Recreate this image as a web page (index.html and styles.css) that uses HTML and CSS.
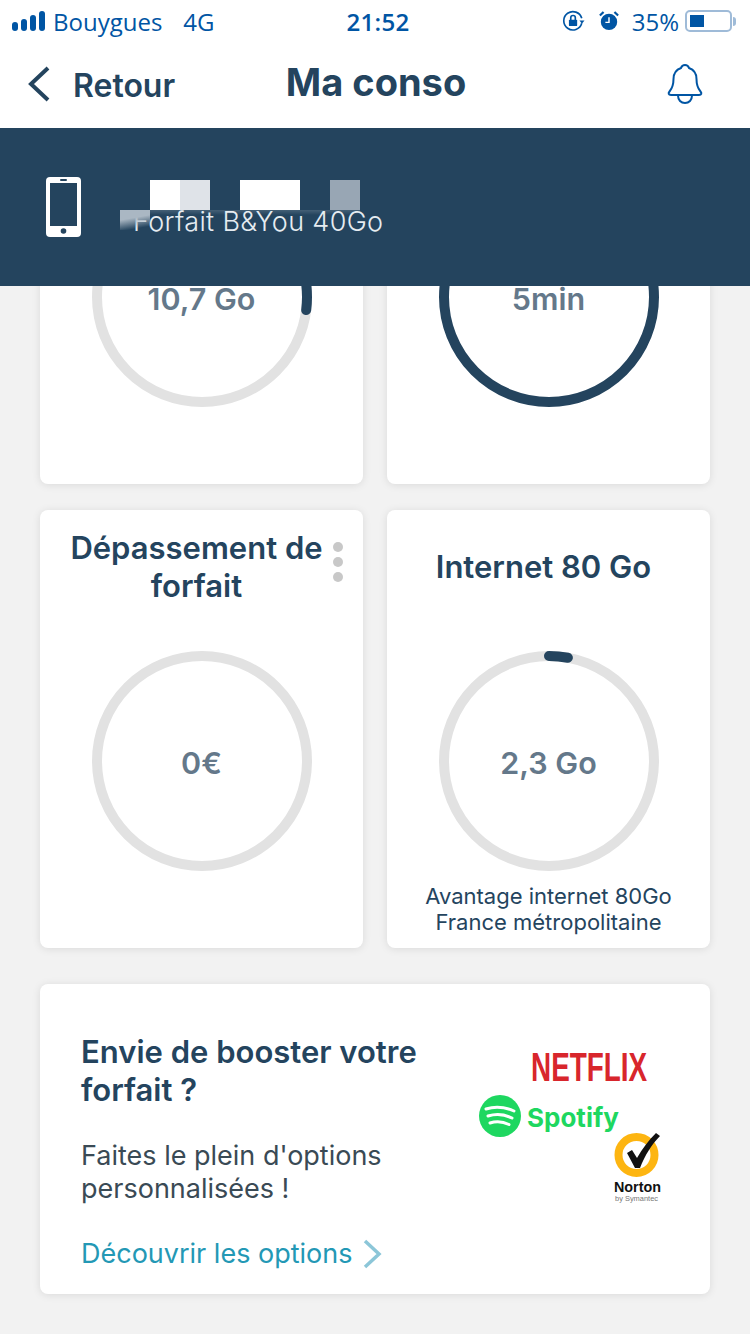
FILE: index.html
```html
<!DOCTYPE HTML>
<html lang="fr">

<head>
    <meta charset="utf-8">
    <meta name="viewport" content="width=device-width, initial-scale=1">
    <title>Ma conso</title>
    <link rel="stylesheet" href="styles.css">
</head>

<body>
    <div class="status-bar">
        <div class="status-left">
            <svg class="signal" width="34" height="20" viewBox="0 0 34 20">
                <rect x="0" y="11" width="6" height="9" rx="3" fill="#0055a4"/>
                <rect x="9" y="8" width="6" height="12" rx="3" fill="#0055a4"/>
                <rect x="18" y="4" width="6" height="16" rx="3" fill="#0055a4"/>
                <rect x="27" y="0" width="6" height="20" rx="3" fill="#0055a4"/>
            </svg>
            <span>Bouygues</span>
            <span class="network">4G</span>
        </div>
        <div class="status-time">21:52</div>
        <div class="status-right">
            <svg width="23" height="22" viewBox="0 0 24 24" fill="none" stroke="#0055a4" stroke-width="1.800">
                <path d="M21 14.500A10 10 0 1 1 21 9"/>
                <path d="M18.500 11.500h5.500l-2.800 3.500z" fill="#0055a4" stroke="none"/>
                <rect x="7" y="10.500" width="9" height="7" rx="1" fill="#0055a4" stroke="none"/>
                <path d="M9 11V8.500a2.500 2.500 0 0 1 5 0V11"/>
            </svg>
            <svg class="alarm" width="20" height="20" viewBox="0 0 22 22">
                <circle cx="11" cy="12" r="9" fill="#0055a4"/>
                <path d="M11 7v5.500H7" fill="none" stroke="#fff" stroke-width="1.600"/>
                <path d="M1 5l4-4M21 5l-4-4" stroke="#0055a4" stroke-width="2.400"/>
            </svg>
            <span class="percent">35%</span>
            <div class="battery"><div class="battery-level"></div></div>
            <div class="battery-nub"></div>
        </div>
    </div>

    <div class="nav">
        <div class="nav-back">
            <svg width="24" height="36" viewBox="0 0 24 36" fill="none" stroke="#24445e" stroke-width="4">
                <path d="M21 2L4 18l17 16"/>
            </svg>
            <span>Retour</span>
        </div>
        <div class="nav-title">Ma conso</div>
        <div class="nav-bell">
            <svg width="38" height="42" viewBox="0 0 38 42" fill="none" stroke="#0055a4" stroke-width="2">
                <path d="M19 2c2.500 0 3.500 1.500 4 3 5 1.800 7.500 6 7.500 11 0 6 1 9 4 12.500 1.500 1.800 1 3.500-1.500 3.500H5c-2.500 0-3-1.700-1.500-3.500 3-3.500 4-6.500 4-12.500 0-5 2.500-9.200 7.500-11 .5-1.500 1.500-3 4-3z"/>
                <path d="M12 32.500c0 4.500 3 7.500 7 7.500s7-3 7-7.500"/>
            </svg>
        </div>
    </div>

    <div class="line-header">
        <svg width="36" height="60" viewBox="0 0 36 60">
            <rect x="0" y="0" width="35" height="60" rx="4" fill="#fff"/>
            <rect x="4" y="6" width="27" height="43" fill="#24445e"/>
            <rect x="14" y="2" width="7" height="2" rx="1" fill="#24445e"/>
            <circle cx="17.500" cy="54" r="2.800" fill="#24445e"/>
        </svg>
        <div class="line-plan">Forfait B&amp;You 40Go</div>
        <div class="mask mask-a"></div>
        <div class="mask mask-b"></div>
        <div class="mask mask-c"></div>
        <div class="mask mask-d"></div>
        <div class="mask mask-e"></div>
        <div class="mask mask-f"></div>
    </div>

    <div class="scroll">
        <div class="cards">
            <div class="card">
                <div class="card-title"></div>
                <div class="ring">
                    <svg width="220" height="220" viewBox="0 0 220 220">
                        <circle class="ring-track" cx="110" cy="110" r="105"/>
                        <circle class="ring-value" cx="110" cy="110" r="105" stroke-dasharray="178 660"/>
                    </svg>
                    <div class="ring-label">10,7 Go</div>
                </div>
            </div>
            <div class="card">
                <div class="card-title"></div>
                <div class="ring">
                    <svg width="220" height="220" viewBox="0 0 220 220">
                        <circle class="ring-value" cx="110" cy="110" r="105"/>
                    </svg>
                    <div class="ring-label">5min</div>
                </div>
            </div>
            <div class="card">
                <div class="card-title">Dépassement de<br>forfait</div>
                <div class="dots"><span></span><span></span><span></span></div>
                <div class="ring">
                    <svg width="220" height="220" viewBox="0 0 220 220">
                        <circle class="ring-track" cx="110" cy="110" r="105"/>
                    </svg>
                    <div class="ring-label">0€</div>
                </div>
            </div>
            <div class="card">
                <div class="card-title">Internet 80 Go</div>
                <div class="ring">
                    <svg width="220" height="220" viewBox="0 0 220 220">
                        <circle class="ring-track" cx="110" cy="110" r="105"/>
                        <circle class="ring-value" cx="110" cy="110" r="105" stroke-dasharray="19 660"/>
                    </svg>
                    <div class="ring-label">2,3 Go</div>
                </div>
                <div class="card-note">Avantage internet 80Go<br>France métropolitaine</div>
            </div>
        </div>

        <div class="promo">
            <div class="promo-text">
                <div class="promo-title">Envie de booster votre<br>forfait ?</div>
                <p class="promo-body">Faites le plein d'options<br>personnalisées !</p>
                <div class="promo-link">
                    <span>Découvrir les options</span>
                    <svg width="20" height="30" viewBox="0 0 20 30" fill="none" stroke="#8cc6d8" stroke-width="3.500">
                        <path d="M3 2l14 13L3 28"/>
                    </svg>
                </div>
            </div>
            <svg class="promo-logos" width="200" height="170" viewBox="0 0 200 170">
                <text class="logo-netflix" transform="translate(60 41) scale(0.68 1)">NETFLIX</text>
                <circle cx="29" cy="76" r="21" fill="#1ed760"/>
                <path d="M15 69c9-3 19-2 28 2M17 76c8-2.500 16-2 24 2M19 83c6-2 13-1.500 19 1.500" fill="none" stroke="#fff" stroke-width="3" stroke-linecap="round"/>
                <text class="logo-spotify" x="56" y="87">Spotify</text>
                <circle cx="165.500" cy="115" r="18" fill="none" stroke="#fdb511" stroke-width="8"/>
                <path d="M156 113l5-3 5 8c5-9 12-18 19-25l4 3c-8 8-15 19-20 32h-5z" fill="#111"/>
                <text class="logo-norton" x="143" y="152" textLength="47" lengthAdjust="spacingAndGlyphs">Norton</text>
                <text class="logo-symantec" x="144" y="161" textLength="43" lengthAdjust="spacingAndGlyphs">by Symantec</text>
            </svg>
        </div>
    </div>
</body>

</html>
```

FILE: styles.css
```css
* {
    box-sizing: border-box;
}

html,
body {
    margin: 0;
    height: 1334px;
    overflow: hidden;
}

body {
    font-family: Inter, "Noto Sans", sans-serif;
    background-color: #f2f2f2;
    color: #24445e;
}

/* status bar */
.status-bar {
    height: 40px;
    padding: 2px 14px 0 12px;
    background-color: #fff;
    display: grid;
    grid-template-columns: 1fr auto 1fr;
    align-items: center;
    color: #0055a4;
    font-family: "Open Sans", sans-serif;
    font-size: 24px;
}

.status-left {
    display: flex;
    align-items: center;
    gap: 7px;
}

.network {
    margin-left: 14px;
}

.status-time {
    margin-left: 8px;
    font-weight: 600;
    letter-spacing: 0.3px;
}

.status-right {
    display: flex;
    align-items: center;
    justify-content: flex-end;
}

.alarm {
    margin-left: 14px;
}

.percent {
    margin-left: 13px;
}

.battery {
    width: 47px;
    height: 22px;
    margin-left: 6px;
    padding: 3px;
    border: 2px solid #9fbbd8;
    border-radius: 5px;
}

.battery-level {
    width: 14px;
    height: 100%;
    background-color: #0055a4;
}

.battery-nub {
    width: 3px;
    height: 9px;
    margin-left: 1px;
    background-color: #9fbbd8;
    border-radius: 0 3px 3px 0;
}

/* nav */
.nav {
    height: 88px;
    padding: 0 46px 0 27px;
    background-color: #fff;
    display: grid;
    grid-template-columns: 1fr auto 1fr;
    align-items: center;
}

.nav-back {
    display: flex;
    align-items: center;
    gap: 22px;
    font-size: 32px;
    font-weight: 600;
}

.nav-back span {
    margin-top: 2px;
}

.nav-title {
    margin: 0 0 4px 21px;
    font-size: 38px;
    font-weight: 700;
}

.nav-bell {
    display: flex;
    justify-content: flex-end;
}

/* line header */
.line-header {
    position: relative;
    height: 158px;
    padding-left: 46px;
    background-color: #24445e;
    display: flex;
    align-items: center;
    gap: 51px;
}

.line-plan {
    margin-top: 29px;
    color: #e6ecf1;
    font-size: 27px;
    font-weight: 300;
    letter-spacing: 0.35px;
}

.mask {
    position: absolute;
    top: 52px;
    width: 30px;
    height: 30px;
}

.mask-a {
    left: 150px;
    background-color: #fff;
}

.mask-b {
    left: 180px;
    background-color: #dfe3e8;
}

.mask-c {
    left: 240px;
    width: 60px;
    background-color: #fff;
}

.mask-d {
    left: 330px;
    background-color: #98a6b4;
}

.mask-e {
    left: 120px;
    top: 82px;
    height: 20px;
    background: linear-gradient(170deg, #aab7c3 40%, rgba(170, 183, 195, 0) 85%);
}

.mask-f {
    left: 150px;
    top: 82px;
    width: 210px;
    height: 5px;
    background: linear-gradient(rgba(255, 255, 255, 0.15), rgba(255, 255, 255, 0));
}

/* scrolled content, first row is partly under the header */
.scroll {
    height: 1048px;
    overflow: hidden;
}

.cards {
    margin-top: -240px;
    padding: 0 40px;
    display: grid;
    grid-template-columns: 323px 323px;
    grid-auto-rows: 438px;
    gap: 26px 24px;
}

.card {
    position: relative;
    padding-top: 19px;
    background-color: #fff;
    border-radius: 8px;
    box-shadow: 0 1px 8px rgba(0, 0, 0, 0.1);
    display: flex;
    flex-direction: column;
    align-items: center;
}

.card-title {
    width: 100%;
    height: 76px;
    padding-right: 10px;
    font-size: 31px;
    font-weight: 600;
    line-height: 38px;
    text-align: center;
    display: flex;
    align-items: center;
    justify-content: center;
}

.dots {
    position: absolute;
    top: 32px;
    right: 20px;
    display: flex;
    flex-direction: column;
    gap: 5px;
}

.dots span {
    width: 10px;
    height: 10px;
    border-radius: 50%;
    background-color: #c8c8c8;
}

.ring {
    margin-top: 46px;
    width: 220px;
    height: 220px;
    display: grid;
    place-items: center;
}

.ring svg,
.ring-label {
    grid-area: 1 / 1;
}

.ring svg {
    transform: rotate(-90deg);
}

.ring-track,
.ring-value {
    fill: none;
    stroke-width: 10px;
}

.ring-track {
    stroke: #e2e2e2;
}

.ring-value {
    stroke: #24445e;
    stroke-linecap: round;
}

.ring-label {
    margin-top: 2px;
    color: #64788a;
    font-size: 30.5px;
    font-weight: 600;
}

.card-note {
    margin-top: 12px;
    font-size: 22px;
    line-height: 26px;
    text-align: center;
}

/* promo */
.promo {
    margin: 36px 40px 0;
    height: 310px;
    padding: 49px 40px 0 41px;
    background-color: #fff;
    border-radius: 8px;
    box-shadow: 0 1px 8px rgba(0, 0, 0, 0.1);
    display: flex;
    justify-content: space-between;
}

.promo-title {
    font-size: 31px;
    font-weight: 600;
    line-height: 38px;
}

.promo-body {
    margin: 30px 0 0;
    color: #3a4a55;
    font-size: 27px;
    line-height: 33px;
}

.promo-link {
    margin-top: 32px;
    display: flex;
    align-items: center;
    gap: 10px;
    color: #2398b5;
    font-size: 27px;
}

.promo-logos {
    margin: 7px -1px 0 0;
    flex-shrink: 0;
}

.logo-netflix {
    fill: #d8262c;
    font-family: "Liberation Sans", sans-serif;
    font-size: 41px;
    font-weight: 700;
}

.logo-spotify {
    fill: #1ed760;
    font-family: Inter, sans-serif;
    font-size: 26px;
    font-weight: 700;
}

.logo-norton {
    fill: #111;
    font-family: "Liberation Sans", sans-serif;
    font-size: 14px;
    font-weight: 700;
}

.logo-symantec {
    fill: #777;
    font-family: "Liberation Sans", sans-serif;
    font-size: 7px;
}
```
